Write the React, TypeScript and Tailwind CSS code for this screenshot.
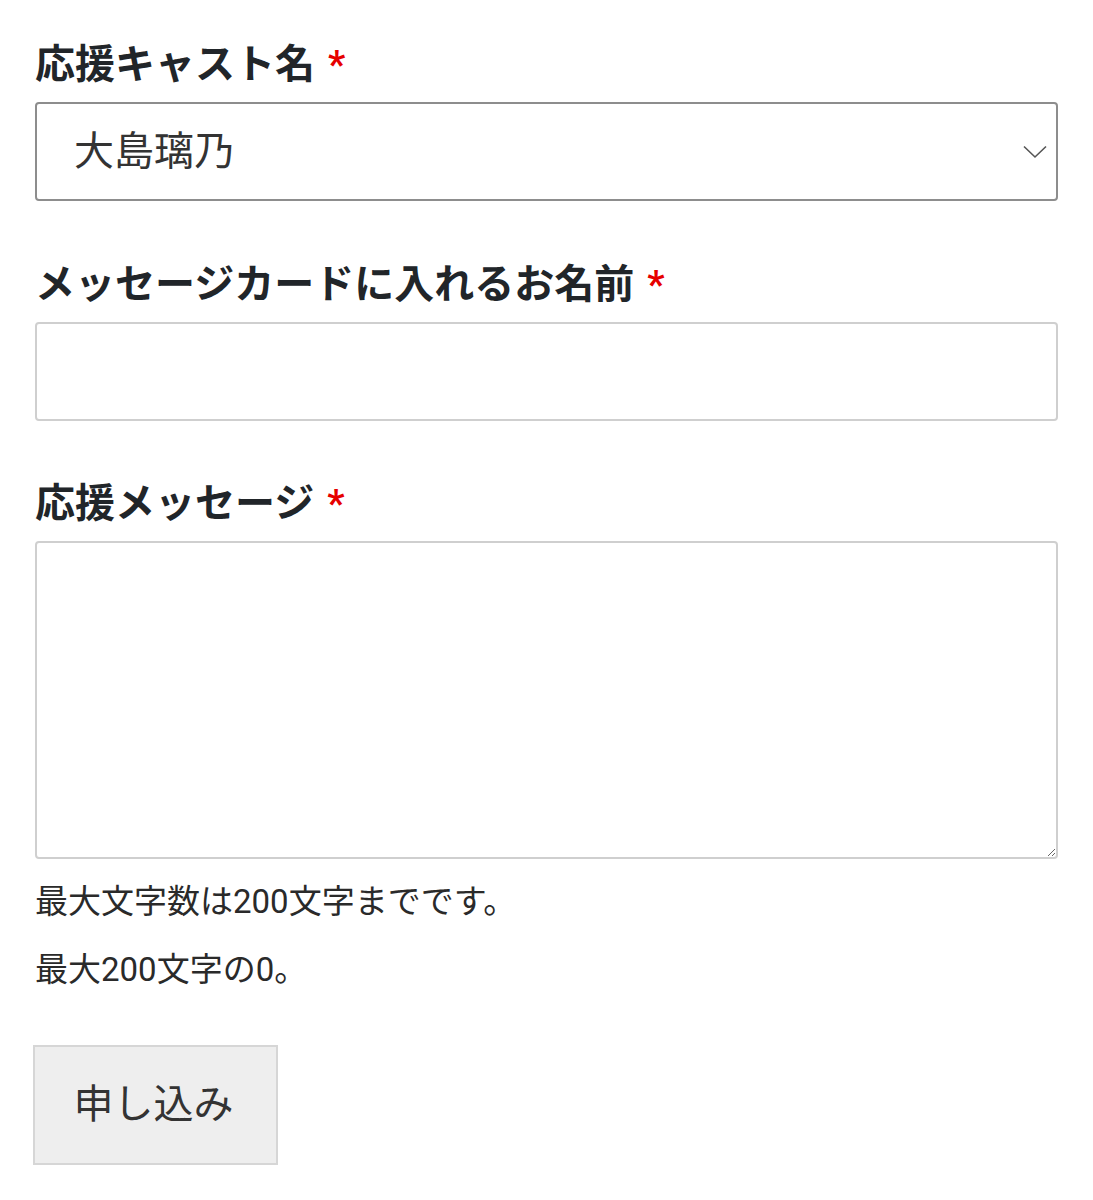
import React from "react";

function Label({ children }: { children: React.ReactNode }) {
  return (
    <div className="flex items-start text-[40px] leading-[60px] font-bold text-[#212529]">
      <span>{children}</span>
      <span className="ml-[13px] text-[#e60000] text-[38px]">*</span>
    </div>
  );
}

export default function App() {
  return (
    <div className="bg-white w-[1093px] min-h-[1200px] px-[35px] pt-[35px] font-['Roboto','Noto_Sans_CJK_JP',sans-serif]">
      <Label>応援キャスト名</Label>
      <div className="relative mt-[7px]">
        <select
          defaultValue="大島璃乃"
          className="appearance-none w-full h-[99px] border-2 border-[#8d8d8d] rounded-[4px] bg-white pl-[37px] text-[40px] text-[#333] outline-none font-['Roboto','Noto_Sans_CJK_JP',sans-serif]"
        >
          <option>大島璃乃</option>
        </select>
        <svg
          className="absolute right-[11px] top-[43px] pointer-events-none"
          width="24"
          height="14"
          viewBox="0 0 24 14"
          fill="none"
        >
          <path d="M1 1.5 L12 12 L23 1.5" stroke="#555" strokeWidth="1.6" />
        </svg>
      </div>

      <div className="mt-[54px]">
        <Label>メッセージカードに入れるお名前</Label>
      </div>
      <input
        type="text"
        className="block mt-[7px] w-full h-[99px] border-2 border-[#cfcfcf] rounded-[4px] bg-white px-[37px] text-[40px] outline-none font-['Roboto','Noto_Sans_CJK_JP',sans-serif]"
      />

      <div className="mt-[53px]">
        <Label>応援メッセージ</Label>
      </div>
      <textarea
        className="block mt-[7px] w-full h-[318px] border-2 border-[#cfcfcf] rounded-[4px] bg-white px-[37px] text-[40px] outline-none font-['Roboto','Noto_Sans_CJK_JP',sans-serif]"
      />

      <p className="mt-[18px] text-[33px] leading-[50px] text-[#2a2a2a]">最大文字数は200文字までです。</p>
      <p className="mt-[18px] text-[33px] leading-[50px] text-[#2a2a2a]">最大200文字の0。</p>

      <button
        type="button"
        className="mt-[50px] -ml-[2px] w-[245px] h-[120px] bg-[#eeeeee] border-2 border-[#d6d6d6] pr-[4px] text-[40px] text-[#333] font-['Roboto','Noto_Sans_CJK_JP',sans-serif]"
      >
        申し込み
      </button>
    </div>
  );
}
